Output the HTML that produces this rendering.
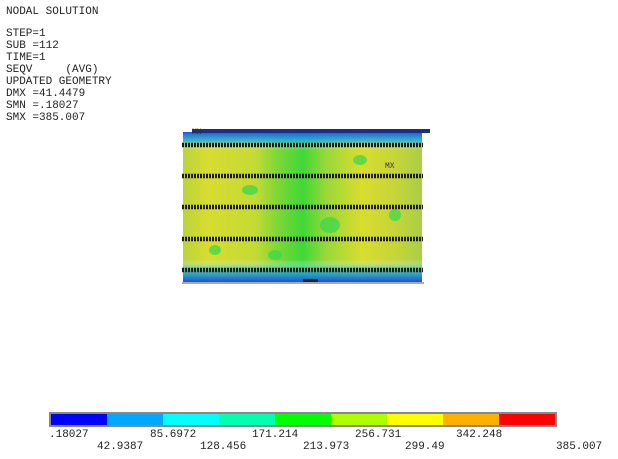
<!DOCTYPE html>
<html><head><style>
body{margin:0;width:618px;height:459px;background:#fff;overflow:hidden;position:relative;font-family:"Liberation Mono",monospace;font-size:11px;color:#222}
.t{position:absolute;left:6px;white-space:pre;line-height:12px}
.l{position:absolute;font-size:11px;white-space:pre}
</style></head><body>
<div class="t" style="top:6px">NODAL SOLUTION</div>
<div class="t" style="top:28px">STEP=1
SUB =112
TIME=1
SEQV     (AVG)
UPDATED GEOMETRY
DMX =41.4479
SMN =.18027
SMX =385.007</div>
<svg style="position:absolute;left:0;top:0" width="618" height="459">
<defs>
<linearGradient id="v" x1="0" x2="1" y1="0" y2="0">
<stop offset="0" stop-color="#b9d43a"/><stop offset=".1" stop-color="#d8dc30"/>
<stop offset=".3" stop-color="#c6da35"/><stop offset=".4" stop-color="#7ad836"/>
<stop offset=".5" stop-color="#3fd838"/><stop offset=".6" stop-color="#9ad838"/>
<stop offset=".75" stop-color="#d9dd2e"/><stop offset=".9" stop-color="#c5d43a"/>
<stop offset="1" stop-color="#a8cf45"/></linearGradient>
<linearGradient id="h" x1="0" x2="0" y1="0" y2="1">
<stop offset="0" stop-color="#1a5de0"/><stop offset=".06" stop-color="#20b0e0" stop-opacity=".8"/>
<stop offset=".12" stop-color="#fff" stop-opacity="0"/><stop offset=".85" stop-color="#fff" stop-opacity="0"/>
<stop offset=".92" stop-color="#22c0d0" stop-opacity=".8"/><stop offset="1" stop-color="#1a50d8"/></linearGradient>
</defs>
<rect x="183" y="132" width="239" height="150" fill="url(#v)"/>
<g fill="#33d850" opacity=".7">
<ellipse cx="250" cy="190" rx="8" ry="5"/><ellipse cx="330" cy="225" rx="10" ry="8"/><ellipse cx="360" cy="160" rx="7" ry="5"/>
<ellipse cx="215" cy="250" rx="6" ry="5"/><ellipse cx="395" cy="215" rx="6" ry="6"/><ellipse cx="275" cy="255" rx="7" ry="5"/>
</g>
<rect x="183" y="132" width="239" height="150" fill="url(#h)"/>
<rect x="192" y="129" width="238" height="4" fill="#1a2f80"/>
<g stroke="#1a1a1a" stroke-width="4.5" stroke-dasharray="2 1">
<line x1="182" y1="145" x2="423" y2="145"/><line x1="182" y1="176" x2="423" y2="176"/>
<line x1="182" y1="207" x2="423" y2="207"/><line x1="182" y1="239" x2="423" y2="239"/>
<line x1="182" y1="270" x2="423" y2="270"/></g>
<line x1="182" y1="283" x2="424" y2="283" stroke="#555"/>
<rect x="303" y="279" width="15" height="3" fill="#222"/>
<text x="192" y="134" font-size="8" font-family="Liberation Mono" fill="#333">MN</text>
<text x="385" y="168" font-size="8" font-family="Liberation Mono" fill="#333">MX</text>
<rect x="49" y="412" width="508" height="15" fill="#888"/>
<rect x="51" y="414" width="56" height="11" fill="#0000ff"/><rect x="107" y="414" width="56" height="11" fill="#00a8ff"/>
<rect x="163" y="414" width="56" height="11" fill="#00ffff"/><rect x="219" y="414" width="56" height="11" fill="#00ffb0"/>
<rect x="275" y="414" width="56" height="11" fill="#00ff00"/><rect x="331" y="414" width="56" height="11" fill="#b0ff00"/>
<rect x="387" y="414" width="56" height="11" fill="#ffff00"/><rect x="443" y="414" width="56" height="11" fill="#ffb000"/>
<rect x="499" y="414" width="56" height="11" fill="#ff0000"/>
</svg>
<div class="l" style="left:49px;top:429px">.18027</div>
<div class="l" style="left:150px;top:429px">85.6972</div>
<div class="l" style="left:252px;top:429px">171.214</div>
<div class="l" style="left:355px;top:429px">256.731</div>
<div class="l" style="left:456px;top:429px">342.248</div>
<div class="l" style="left:97px;top:441px">42.9387</div>
<div class="l" style="left:200px;top:441px">128.456</div>
<div class="l" style="left:303px;top:441px">213.973</div>
<div class="l" style="left:405px;top:441px">299.49</div>
<div class="l" style="left:556px;top:441px">385.007</div>
</body></html>
